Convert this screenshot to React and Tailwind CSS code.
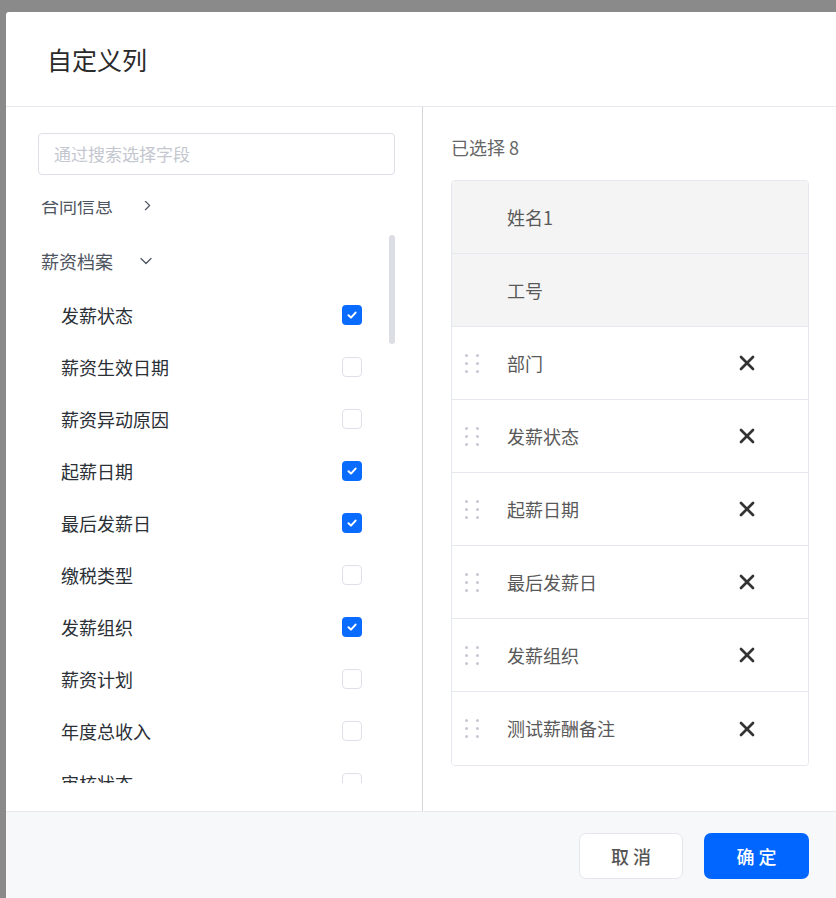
import React, { useState } from 'react';
import { ChevronRight, ChevronDown, X } from 'lucide-react';

const FONT = { fontFamily: '"Noto Sans CJK SC", "Noto Sans", sans-serif' };

const fields = [
  { id: 'status', name: '发薪状态', checked: true },
  { id: 'effective', name: '薪资生效日期', checked: false },
  { id: 'reason', name: '薪资异动原因', checked: false },
  { id: 'start', name: '起薪日期', checked: true },
  { id: 'last', name: '最后发薪日', checked: true },
  { id: 'tax', name: '缴税类型', checked: false },
  { id: 'org', name: '发薪组织', checked: true },
  { id: 'plan', name: '薪资计划', checked: false },
  { id: 'income', name: '年度总收入', checked: false },
  { id: 'audit', name: '审核状态', checked: false },
];

const selected = [
  { name: '姓名1', fixed: true },
  { name: '工号', fixed: true },
  { name: '部门' },
  { name: '发薪状态' },
  { name: '起薪日期' },
  { name: '最后发薪日' },
  { name: '发薪组织' },
  { name: '测试薪酬备注' },
];

function Checkbox({ checked, onClick }) {
  if (checked) {
    return (
      <button onClick={onClick} className="w-[20px] h-[20px] rounded-[4px] bg-[#0a6cff] flex items-center justify-center">
        <svg width="12" height="12" viewBox="0 0 12 12">
          <path d="M2.5 6.2 L5 8.6 L9.6 3.6" fill="none" stroke="#fff" strokeWidth="2" strokeLinecap="round" strokeLinejoin="round" />
        </svg>
      </button>
    );
  }
  return <button onClick={onClick} className="w-[20px] h-[20px] rounded-[4px] border border-[#dfe1e8] bg-white" />;
}

function DragDots() {
  return (
    <svg width="14" height="19" viewBox="0 0 14 19">
      {[1.5, 9.5, 17.5].map(y => (
        <g key={y}>
          <circle cx="1.5" cy={y} r="1.5" fill="#c5c9d2" />
          <circle cx="12.5" cy={y} r="1.5" fill="#c5c9d2" />
        </g>
      ))}
    </svg>
  );
}

export default function App() {
  const [items, setItems] = useState(fields);

  const toggle = (id) => {
    setItems(prev => prev.map(f => (f.id === id ? { ...f, checked: !f.checked } : f)));
  };

  return (
    <div className="min-h-screen bg-[#8a8a8a] pl-[6px] pt-[12px] overflow-hidden" style={FONT}>
      <div className="bg-white rounded-tl-[3px] h-[886px] flex flex-col">
        {/* Header */}
        <div className="h-[95px] shrink-0 flex items-center pl-[41px] border-b border-[#e8e9ee]">
          <h1 className="text-[25px] text-[#2a2a2a] leading-none">自定义列</h1>
        </div>

        {/* Body */}
        <div className="h-[704px] shrink-0 flex">
          {/* Left: available fields */}
          <div className="w-[416px] shrink-0 relative pt-[26px]">
            <div className="ml-[32px] mr-[27px] h-[42px] rounded-[4px] border border-[#dcdfe6] flex items-center px-[15px]">
              <input
                className="w-full outline-none text-[17px] placeholder:text-[#c4c7cf] text-[#333] bg-transparent"
                placeholder="通过搜索选择字段"
              />
            </div>

            <div className="mt-[26px] h-[582px] overflow-hidden">
              <div className="-mt-[24px]">
                <div className="h-[56px] flex items-center pl-[35px] text-[18px] text-[#4e5560]">
                  <span>合同信息</span>
                  <ChevronRight size={17} strokeWidth={1.6} className="ml-[26px] text-[#4e5560]" />
                </div>
                <div className="h-[56px] flex items-center pl-[35px] text-[18px] text-[#4e5560]">
                  <span>薪资档案</span>
                  <ChevronDown size={20} strokeWidth={1.5} className="ml-[23px] text-[#4e5560]" />
                </div>
                {items.map(f => (
                  <div key={f.id} className="h-[52px] flex items-center pl-[55px] pr-[60px] text-[18px] text-[#2b2f36]">
                    <span className="flex-1">{f.name}</span>
                    <Checkbox checked={f.checked} onClick={() => toggle(f.id)} />
                  </div>
                ))}
              </div>
            </div>

            {/* scrollbar thumb */}
            <div className="absolute left-[383px] top-[128px] w-[6px] h-[109px] rounded-full bg-[#dcdee4]" />
          </div>

          <div className="w-px bg-[#d6d6d6]" />

          {/* Right: selected fields */}
          <div className="flex-1 pt-[28px] pl-[28px] pr-[27px]">
            <div className="text-[18px] leading-[24px] text-[#666]">已选择 8</div>
            <div className="mt-[21px] border border-[#e6e8ef] rounded-[4px] overflow-hidden">
              {selected.map((s, i) => (
                <div
                  key={s.name}
                  className={`h-[73px] flex items-center pl-[13px] pr-[49px] ${s.fixed ? 'bg-[#f4f4f4]' : 'bg-white'} ${i < selected.length - 1 ? 'border-b border-[#e6e8ef]' : ''}`}
                >
                  <div className="w-[14px] flex items-center">{!s.fixed && <DragDots />}</div>
                  <span className="ml-[28px] flex-1 text-[18px] text-[#595959]">{s.name}</span>
                  {!s.fixed && <X size={24} strokeWidth={2.7} className="text-[#333]" />}
                </div>
              ))}
            </div>
          </div>
        </div>

        {/* Footer */}
        <div className="flex-1 bg-[#f7f8fa] border-t border-[#e8e9ee] flex justify-end items-start pt-[21px] pr-[27px] gap-[21px]">
          <button className="w-[104px] h-[46px] rounded-[7px] bg-white border border-[#e5e6eb] text-[18px] font-medium tracking-[4px] pl-[4px] text-[#555]">
            取消
          </button>
          <button className="w-[105px] h-[46px] rounded-[7px] bg-[#0066ff] text-[18px] font-medium tracking-[4px] pl-[4px] text-white">
            确定
          </button>
        </div>
      </div>
    </div>
  );
}
